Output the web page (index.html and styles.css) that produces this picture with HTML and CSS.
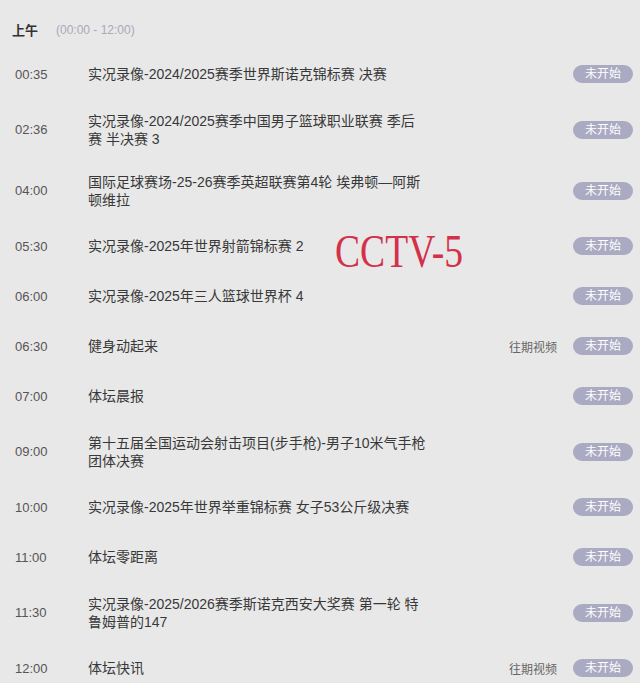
FILE: index.html
```html
<!DOCTYPE html>
<html lang="zh-CN">
<head>
<meta charset="utf-8">
<link rel="stylesheet" href="styles.css">
</head>
<body>
<div class="page">
  <div class="period">
    <span class="period-name">上午</span>
    <span class="period-range">(00:00 - 12:00)</span>
  </div>
  <ul class="list">
    <li class="row"><span class="time">00:35</span><span class="title">实况录像-2024/2025赛季世界斯诺克锦标赛 决赛</span><span class="extra"></span><span class="badge">未开始</span></li>
    <li class="row"><span class="time">02:36</span><span class="title">实况录像-2024/2025赛季中国男子篮球职业联赛 季后赛 半决赛 3</span><span class="extra"></span><span class="badge">未开始</span></li>
    <li class="row"><span class="time">04:00</span><span class="title">国际足球赛场-25-26赛季英超联赛第4轮 埃弗顿—阿斯顿维拉</span><span class="extra"></span><span class="badge">未开始</span></li>
    <li class="row"><span class="time">05:30</span><span class="title">实况录像-2025年世界射箭锦标赛 2</span><span class="extra"></span><span class="badge">未开始</span></li>
    <li class="row"><span class="time">06:00</span><span class="title">实况录像-2025年三人篮球世界杯 4</span><span class="extra"></span><span class="badge">未开始</span></li>
    <li class="row"><span class="time">06:30</span><span class="title">健身动起来</span><span class="extra">往期视频</span><span class="badge">未开始</span></li>
    <li class="row"><span class="time">07:00</span><span class="title">体坛晨报</span><span class="extra"></span><span class="badge">未开始</span></li>
    <li class="row"><span class="time">09:00</span><span class="title">第十五届全国运动会射击项目(步手枪)-男子10米气手枪团体决赛</span><span class="extra"></span><span class="badge">未开始</span></li>
    <li class="row"><span class="time">10:00</span><span class="title">实况录像-2025年世界举重锦标赛 女子53公斤级决赛</span><span class="extra"></span><span class="badge">未开始</span></li>
    <li class="row"><span class="time">11:00</span><span class="title">体坛零距离</span><span class="extra"></span><span class="badge">未开始</span></li>
    <li class="row"><span class="time">11:30</span><span class="title">实况录像-2025/2026赛季斯诺克西安大奖赛 第一轮 特鲁姆普的147</span><span class="extra"></span><span class="badge">未开始</span></li>
    <li class="row"><span class="time">12:00</span><span class="title">体坛快讯</span><span class="extra">往期视频</span><span class="badge">未开始</span></li>
  </ul>
  <div class="watermark">CCTV-5</div>
</div>
</body>
</html>
```
FILE: styles.css
```css
html, body {
  margin: 0;
  padding: 0;
  background: #e8e8e8;
}
.page {
  position: relative;
  width: 640px;
  height: 683px;
  overflow: hidden;
  font-family: "Liberation Sans", "Noto Sans CJK SC", sans-serif;
  color: #333;
}
.period {
  display: flex;
  align-items: center;
  height: 49px;
  padding: 10px 0 0 12px;
  box-sizing: border-box;
}
.period-name {
  font-size: 13px;
  font-weight: bold;
  color: #333;
  width: 44px;
}
.period-range {
  font-size: 12px;
  color: #a9a9ba;
}
.list {
  list-style: none;
  margin: 0;
  padding: 0;
}
.row {
  display: flex;
  align-items: center;
  box-sizing: border-box;
  min-height: 50px;
  padding: 12.5px 7px 12.5px 15px;
}
.time {
  width: 73px;
  flex: none;
  font-size: 13px;
  color: #555;
}
.title {
  width: 339px;
  flex: none;
  font-size: 14px;
  line-height: 18px;
  color: #383838;
}
.extra {
  flex: 1;
  text-align: right;
  font-size: 12px;
  color: #666;
  padding-right: 16px;
}
.badge {
  flex: none;
  width: 60px;
  height: 18px;
  line-height: 18px;
  border-radius: 9px;
  background: #aaaac2;
  color: #fff;
  font-size: 12px;
  text-align: center;
}
.watermark {
  position: absolute;
  left: 335px;
  top: 226px;
  font-family: "Liberation Serif", serif;
  font-size: 47px;
  line-height: 50px;
  color: #d4304a;
  transform: scaleX(0.8);
  transform-origin: left top;
  white-space: nowrap;
}
```
